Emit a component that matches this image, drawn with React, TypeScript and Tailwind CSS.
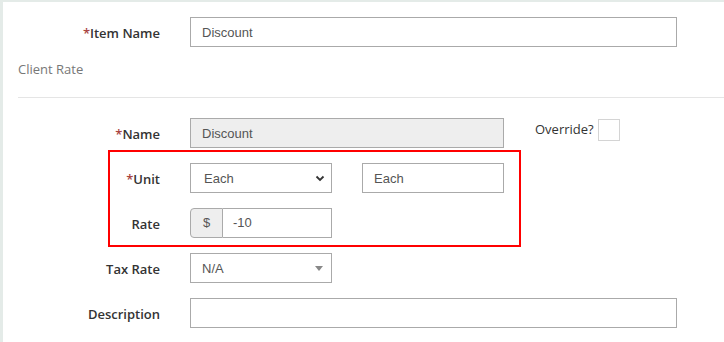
import React from "react";

const Label = ({ text, req }: { text: string; req?: boolean }) => (
  <div className="w-[157px] shrink-0 pt-[3px] text-right text-[13px] font-semibold text-[#333] font-['Open_Sans',sans-serif]">
    {req && <span className="text-[#a94442]">*</span>}
    {text}
  </div>
);

const inputCls =
  "h-[30px] border border-[#aaaaaa] bg-white px-[11px] pt-[1px] flex items-center text-[13px] text-[#555] font-['Liberation_Sans',Arial,sans-serif]";

export default function App() {
  return (
    <div className="w-[724px] h-[342px] bg-[#e4ebe8] pl-[3px] pt-[2px] overflow-hidden">
      <div className="relative bg-white h-full w-full">
        {/* Item Name */}
        <div className="flex items-center gap-[30px] pt-[15px]">
          <Label text="Item Name" req />
          <div className={`${inputCls} w-[487px]`}>Discount</div>
        </div>

        <div className="mt-[13px] pl-[15px] h-[20px] flex items-center text-[13px] text-[#777] font-['Open_Sans',sans-serif]">
          Client Rate
        </div>
        <div className="mt-[17px] ml-[15px] h-px bg-[#e5e5e5]" />

        <div className="mt-[20px] flex flex-col gap-[15px]">
          {/* Name */}
          <div className="flex items-start gap-[30px]">
            <div className="h-[30px] flex items-center">
              <Label text="Name" req />
            </div>
            <div className={`${inputCls} w-[314px] !bg-[#eeeeee]`}>Discount</div>
            <div className="flex items-center h-[22px] mt-px ml-px">
              <span className="text-[13px] text-[#333] font-['Open_Sans',sans-serif]">Override?</span>
              <div className="ml-[4px] w-[22px] h-[22px] border border-[#d4d4d4] bg-white" />
            </div>
          </div>

          {/* Unit */}
          <div className="flex items-center gap-[30px]">
            <Label text="Unit" req />
            <div className={`${inputCls} w-[142px] justify-between !pl-[13px] !pr-[6px]`}>
              <span>Each</span>
              <svg width="10" height="7" viewBox="0 0 10 7">
                <path d="M1.5 1.5 L5 5 L8.5 1.5" fill="none" stroke="#333" strokeWidth="1.8" />
              </svg>
            </div>
            <div className={`${inputCls} w-[142px]`}>Each</div>
          </div>

          {/* Rate */}
          <div className="flex items-center gap-[30px]">
            <Label text="Rate" />
            <div className="flex w-[142px] h-[30px] font-['Liberation_Sans',Arial,sans-serif] text-[13px] text-[#555]">
              <div className="w-[33px] shrink-0 flex items-center justify-center bg-[#eeeeee] border border-[#aaaaaa] rounded-l-[4px]">
                $
              </div>
              <div className="flex-1 flex items-center border border-l-0 border-[#aaaaaa] pl-[10px]">-10</div>
            </div>
          </div>

          {/* Tax Rate */}
          <div className="flex items-center gap-[30px]">
            <Label text="Tax Rate" />
            <div className={`${inputCls} w-[142px] justify-between !pr-[8px]`}>
              <span>N/A</span>
              <svg width="8" height="5" viewBox="0 0 8 5">
                <path d="M0 0 L8 0 L4 5 Z" fill="#888" />
              </svg>
            </div>
          </div>

          {/* Description */}
          <div className="flex items-center gap-[30px]">
            <Label text="Description" />
            <div className={`${inputCls} w-[487px]`} />
          </div>
        </div>

        {/* red annotation box */}
        <div className="absolute left-[105px] top-[148px] w-[413px] h-[97px] border-2 border-[#ff0000] pointer-events-none" />
      </div>
    </div>
  );
}
